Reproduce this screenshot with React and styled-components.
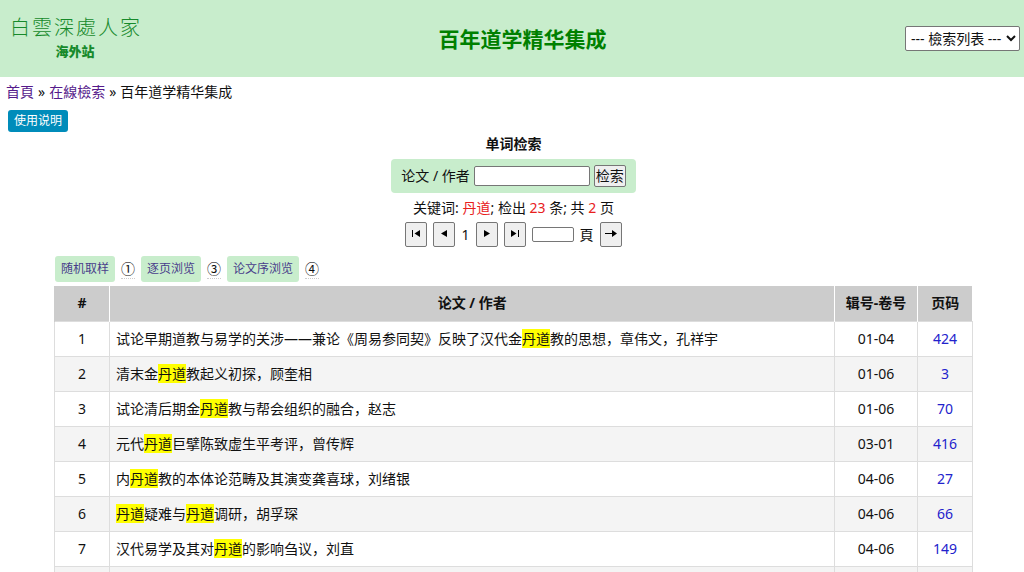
import { useState } from "react";
import styled, { createGlobalStyle } from "styled-components";

const KEYWORD = "丹道";

const ROWS = [
  {
    id: 1,
    paper:
      "试论早期道教与易学的关涉——兼论《周易参同契》反映了汉代金丹道教的思想，章伟文，孔祥宇",
    volume: "01-04",
    page: "424",
  },
  { id: 2, paper: "清末金丹道教起义初探，顾奎相", volume: "01-06", page: "3" },
  { id: 3, paper: "试论清后期金丹道教与帮会组织的融合，赵志", volume: "01-06", page: "70" },
  { id: 4, paper: "元代丹道巨擘陈致虚生平考评，曾传辉", volume: "03-01", page: "416" },
  { id: 5, paper: "内丹道教的本体论范畴及其演变龚喜球，刘绪银", volume: "04-06", page: "27" },
  { id: 6, paper: "丹道疑难与丹道调研，胡孚琛", volume: "04-06", page: "66" },
  { id: 7, paper: "汉代易学及其对丹道的影响刍议，刘直", volume: "04-06", page: "149" },
];

const BROWSE_LINKS = [
  { label: "随机取样", mark: "①" },
  { label: "逐页浏览", mark: "③" },
  { label: "论文序浏览", mark: "④" },
];

const ICONS = {
  first: "M1 1h1v7H1z M9 1v7L3.5 4.5z",
  prev: "M8 1v7L2 4.5z",
  next: "M2 1v7l6-3.5z",
  last: "M1 1v7l5.5-3.5z M8 1h1v7H8z",
};

function Highlighted({ text }) {
  return text
    .split(KEYWORD)
    .flatMap((part, i) => (i === 0 ? [part] : [<Mark key={i}>{KEYWORD}</Mark>, part]));
}

function PagerIcon({ name }) {
  return (
    <svg width="10" height="10" viewBox="0 0 10 10" aria-hidden="true">
      <path d={ICONS[name]} />
    </svg>
  );
}

export default function App() {
  const [query, setQuery] = useState("");
  const [page, setPage] = useState("");

  return (
    <>
      <GlobalStyle />
      <Header>
        <Logo href="#">
          <LogoName>
            {[..."白雲深處人家"].map((char) => (
              <span key={char}>{char}</span>
            ))}
          </LogoName>
          <LogoSite>海外站</LogoSite>
        </Logo>
        <Title>百年道学精华集成</Title>
        <ListSelect aria-label="檢索列表">
          <option>--- 檢索列表 ---</option>
        </ListSelect>
      </Header>

      <Breadcrumb>
        <VisitedLink href="#">首頁</VisitedLink>
        <span>»</span>
        <VisitedLink href="#">在線檢索</VisitedLink>
        <span>»</span>
        <span>百年道学精华集成</span>
      </Breadcrumb>
      <HelpButton type="button">使用说明</HelpButton>

      <Main>
        <SearchArea>
          <SearchTitle>单词检索</SearchTitle>
          <SearchForm onSubmit={(e) => e.preventDefault()}>
            <label htmlFor="query">论文 / 作者</label>
            <QueryInput
              id="query"
              type="text"
              value={query}
              onChange={(e) => setQuery(e.target.value)}
            />
            <SearchButton>检索</SearchButton>
          </SearchForm>
          <Summary>
            关键词: <Red>{KEYWORD}</Red>; 检出 <Red>23</Red> 条; 共 <Red>2</Red> 页
          </Summary>
          <Pager>
            <PagerButton type="button" aria-label="第一頁">
              <PagerIcon name="first" />
            </PagerButton>
            <PagerButton type="button" aria-label="上一頁">
              <PagerIcon name="prev" />
            </PagerButton>
            <span>1</span>
            <PagerButton type="button" aria-label="下一頁">
              <PagerIcon name="next" />
            </PagerButton>
            <PagerButton type="button" aria-label="最後一頁">
              <PagerIcon name="last" />
            </PagerButton>
            <PageInput
              id="page"
              type="text"
              value={page}
              onChange={(e) => setPage(e.target.value)}
            />
            <label htmlFor="page">頁</label>
            <PagerButton type="button" aria-label="前往">
              <svg width="14" height="10" viewBox="0 0 14 10" aria-hidden="true">
                <path d="M1 4h7V1l5 3.5L8 8V5H1z" />
              </svg>
            </PagerButton>
          </Pager>
        </SearchArea>

        <BrowseBar>
          {BROWSE_LINKS.map(({ label, mark }) => (
            <BrowseItem key={mark}>
              <BrowseLink href="#">{label}</BrowseLink>
              <BrowseMark>{mark}</BrowseMark>
            </BrowseItem>
          ))}
        </BrowseBar>

        <Table>
          <thead>
            <tr>
              <HeadCell $width="6%">#</HeadCell>
              <HeadCell>论文 / 作者</HeadCell>
              <HeadCell $width="9%">辑号-卷号</HeadCell>
              <HeadCell $width="6%">页码</HeadCell>
            </tr>
          </thead>
          <tbody>
            {ROWS.map((row) => (
              <Row key={row.id}>
                <Cell>{row.id}</Cell>
                <Cell $align="left">
                  <Highlighted text={row.paper} />
                </Cell>
                <Cell>{row.volume}</Cell>
                <Cell>
                  <PageLink href="#">{row.page}</PageLink>
                </Cell>
              </Row>
            ))}
            <Row>
              <Cell />
              <Cell />
              <Cell />
              <Cell />
            </Row>
          </tbody>
        </Table>
      </Main>
    </>
  );
}

const GlobalStyle = createGlobalStyle`
  * {
    box-sizing: border-box;
  }
  html {
    scrollbar-width: none;
  }
  body {
    margin: 0;
    background-color: #fff;
    color: #111;
    font-family: "Noto Sans", "Noto Sans CJK SC", sans-serif;
    font-size: 14px;
    line-height: 20px;
  }
  input,
  button,
  select {
    font: inherit;
    color: inherit;
  }
`;

const Header = styled.header`
  display: flex;
  align-items: center;
  justify-content: space-between;
  min-height: 77px;
  padding: 0 4px 0 10px;
  background-color: #c8edcc;
`;

const Logo = styled.a`
  display: flex;
  flex-direction: column;
  align-items: center;
  gap: 4px;
  color: #178a2b;
  text-decoration: none;
`;

const LogoName = styled.span`
  display: flex;
  gap: 2px;
  font-family: "Noto Sans CJK TC", sans-serif;
  font-size: 20px;
  font-weight: 300;
  line-height: 22px;
`;

const LogoSite = styled.span`
  font-family: "Liberation Serif", "Noto Sans CJK TC", serif;
  font-size: 13px;
  font-weight: 900;
`;

const Title = styled.h1`
  margin: 0;
  color: #008000;
  font-size: 21px;
  line-height: 28px;
`;

const ListSelect = styled.select`
  height: 25px;
  padding: 0 1px;
  border: 1px solid #767676;
  border-radius: 2px;
  background-color: #fff;
`;

const Breadcrumb = styled.nav`
  display: flex;
  gap: 4px;
  padding: 5px 6px;
`;

const VisitedLink = styled.a`
  color: #551a8b;
  text-decoration: none;
`;

const HelpButton = styled.button`
  display: block;
  height: 22px;
  margin: 3px 8px 2px;
  padding: 0 6px;
  border: 0;
  border-radius: 3px;
  background-color: #008cba;
  color: #fff;
  font-size: 12px;
  line-height: 20px;
`;

const Main = styled.main`
  padding-left: 3px;
`;

const SearchArea = styled.section`
  display: flex;
  flex-direction: column;
  align-items: center;
`;

const SearchTitle = styled.h2`
  margin: 0 0 5px;
  font-size: 14px;
  line-height: 20px;
`;

const SearchForm = styled.form`
  display: flex;
  align-items: center;
  gap: 4px;
  height: 34px;
  padding: 0 10px;
  border-radius: 4px;
  background-color: #c8edcc;
`;

const QueryInput = styled.input`
  width: 116px;
  height: 20px;
  border: 1px solid #767676;
  border-radius: 2px;
  background-color: #fff;
`;

const SearchButton = styled.button`
  height: 22px;
  padding: 0 1px;
  border: 1px solid #767676;
  border-radius: 2px;
  background-color: #efefef;
`;

const Summary = styled.p`
  margin: 5px 0 4px;
`;

const Red = styled.span`
  color: #e8201c;
`;

const Pager = styled.div`
  display: flex;
  align-items: center;
  gap: 6px;
`;

const PagerButton = styled.button`
  display: flex;
  align-items: center;
  justify-content: center;
  width: 22px;
  height: 25px;
  padding: 0 0 2px;
  border: 1px solid #767676;
  border-radius: 2px;
  background-color: #efefef;
`;

const PageInput = styled.input`
  width: 42px;
  height: 15px;
  border: 1px solid #767676;
  border-radius: 2px;
`;

const BrowseBar = styled.div`
  display: flex;
  gap: 6px;
  width: 90%;
  margin: 9px auto 4px;
  padding-left: 1px;
`;

const BrowseItem = styled.span`
  display: flex;
  align-items: center;
  gap: 6px;
`;

const BrowseLink = styled.a`
  padding: 3px 6px;
  border-radius: 3px;
  background-color: #c8edcc;
  color: #483d8b;
  font-size: 12px;
  text-decoration: none;
`;

const BrowseMark = styled.span`
  border-bottom: 1px dotted #ccc;
  line-height: 18px;
`;

const Table = styled.table`
  width: 90%;
  margin: 0 auto;
  border-collapse: collapse;
`;

const HeadCell = styled.th`
  width: ${({ $width }) => $width || "auto"};
  height: 35px;
  padding: 0;
  border-left: 1px solid #fff;
  background-color: #ccc;

  &:first-child {
    border-left-color: #ccc;
  }
`;

const Row = styled.tr`
  &:nth-child(even) {
    background-color: #f4f4f4;
  }
`;

const Cell = styled.td`
  height: 35px;
  padding: 0 6px;
  border: 1px solid #ddd;
  text-align: ${({ $align }) => $align || "center"};
`;

const Mark = styled.mark`
  background-color: #ff0;
  color: inherit;
`;

const PageLink = styled.a`
  color: #2222cc;
  text-decoration: none;
`;
